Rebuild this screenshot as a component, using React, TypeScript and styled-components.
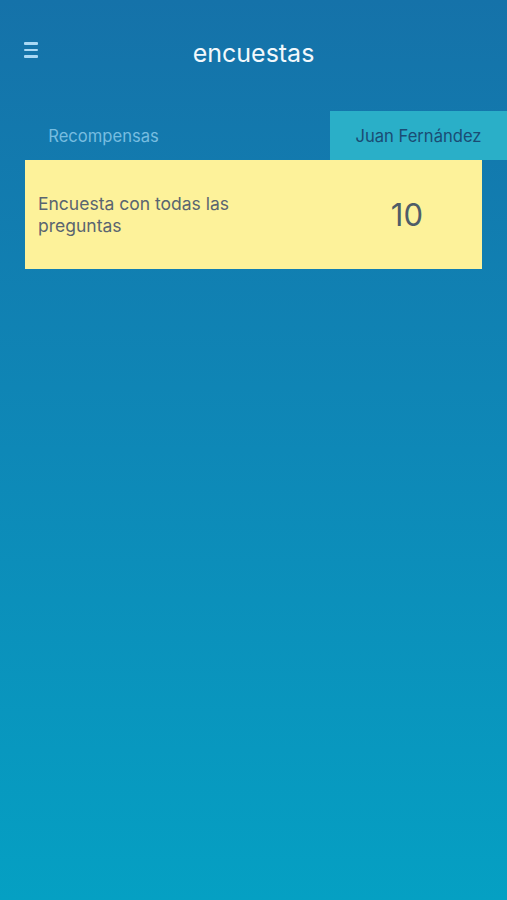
import styled, { createGlobalStyle } from 'styled-components';

const GlobalStyle = createGlobalStyle`
    html, body {
        margin: 0;
        padding: 0;
    }
    body {
        font-family: Inter, 'Liberation Sans', sans-serif;
    }
`;

interface Survey {
    title: string;
    points: number;
}

const surveys: Survey[] = [{ title: 'Encuesta con todas las preguntas', points: 10 }];

export default function App() {
    return (
        <Screen>
            <GlobalStyle />
            <Header>
                <MenuButton aria-label="menu">
                    <MenuBar />
                    <MenuBar />
                    <MenuBar />
                </MenuButton>
                <Title>encuestas</Title>
            </Header>
            <Tabs>
                <Tab>Recompensas</Tab>
                <Tab $active>Juan Fernández</Tab>
            </Tabs>
            <List>
                {surveys.map((s) => (
                    <Card key={s.title}>
                        <CardTitle>{s.title}</CardTitle>
                        <Points>{s.points}</Points>
                    </Card>
                ))}
            </List>
        </Screen>
    );
}

const Screen = styled.div`
    width: 507px;
    height: 900px;
    background: linear-gradient(180deg, #1572a9 0%, #0e88b7 50%, #05a0c3 100%);
    display: flex;
    flex-direction: column;
    overflow: hidden;
`;

const Header = styled.header`
    position: relative;
    height: 64px;
    margin-top: 21px;
    display: flex;
    align-items: center;
    justify-content: center;
`;

const MenuButton = styled.div`
    position: absolute;
    left: 24px;
    top: 21px;
    width: 14px;
    display: flex;
    flex-direction: column;
    gap: 4px;
`;

const MenuBar = styled.span`
    display: block;
    height: 2.5px;
    border-radius: 1px;
    background: #a9d9f5;
`;

const Title = styled.h1`
    margin: 0;
    margin-top: 0;
    font-weight: 400;
    font-size: 25px;
    color: #f2f8fc;
`;

const Tabs = styled.div`
    margin-top: 26px;
    display: flex;
    justify-content: space-between;
    height: 49px;
`;

const Tab = styled.div<{ $active?: boolean }>`
    display: flex;
    align-items: center;
    justify-content: center;
    width: ${(p) => (p.$active ? '177px' : '207px')};
    padding-top: 1px;
    font-size: 16.6px;
    background: ${(p) => (p.$active ? '#2aafc8' : 'transparent')};
    color: ${(p) => (p.$active ? '#1a4c74' : '#77bde0')};
`;

const List = styled.div`
    padding: 0 25px;
`;

const Card = styled.div`
    height: 109px;
    background: #fdf29a;
    display: flex;
    align-items: center;
    padding: 0 59px 0 13px;
    box-sizing: border-box;
    color: #5a6570;
`;

const CardTitle = styled.div`
    flex: 1;
    max-width: 250px;
    font-size: 17.5px;
    line-height: 22px;
    margin-top: 1px;
`;

const Points = styled.div`
    margin-left: auto;
    font-size: 31px;
    margin-top: -1px;
    color: #4f5d68;
`;
